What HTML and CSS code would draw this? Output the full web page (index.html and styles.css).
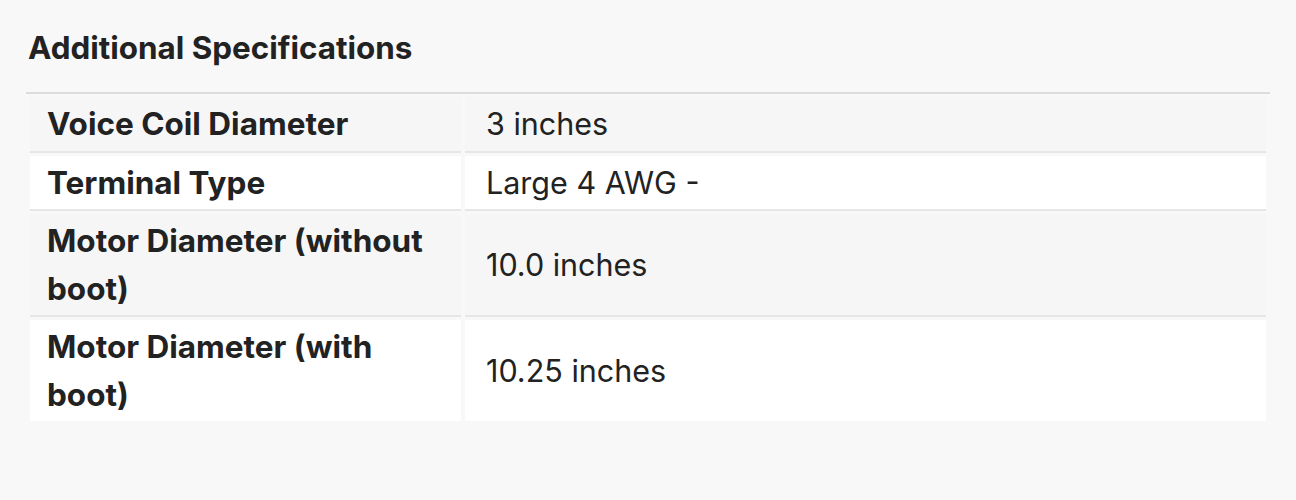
FILE: index.html
```html
<!DOCTYPE html>
<html>
<head>
<meta charset="utf-8">
<link rel="stylesheet" href="styles.css">
</head>
<body>
<section class="specs">
  <h2 class="specs-title">Additional Specifications</h2>
  <table class="specs-table">
    <tbody>
      <tr class="row-odd">
        <th class="label">Voice Coil Diameter</th>
        <td class="value">3 inches</td>
      </tr>
      <tr class="row-even">
        <th class="label">Terminal Type</th>
        <td class="value">Large 4 AWG -</td>
      </tr>
      <tr class="row-odd">
        <th class="label">Motor Diameter (without boot)</th>
        <td class="value">10.0 inches</td>
      </tr>
      <tr class="row-even last">
        <th class="label">Motor Diameter (with boot)</th>
        <td class="value">10.25 inches</td>
      </tr>
    </tbody>
  </table>
</section>
</body>
</html>
```

FILE: styles.css
```css
html, body {
  margin: 0;
  padding: 0;
  background: #f8f8f8;
}
body {
  font-family: Inter, "Noto Sans", "Liberation Sans", sans-serif;
  color: #222;
}
.specs {
  padding: 28px 26px 0 26px;
}
.specs-title {
  margin: 0 0 24px 2px;
  font-size: 31.4px;
  line-height: 40px;
  font-weight: 700;
  color: #222;
}
.specs-table {
  width: 1244px;
  border-collapse: separate;
  border-spacing: 4px 3px;
  border-top: 2px solid #dcdcdc;
  table-layout: fixed;
}
.label {
  width: 431px;
  box-sizing: border-box;
  text-align: left;
  font-weight: 700;
}
.label, .value {
  font-size: 31.5px;
  line-height: 47.5px;
  padding: 3px 16px 3px 17px;
  border-bottom: 2px solid #e6e6e6;
  vertical-align: middle;
}
.value {
  font-weight: 400;
  font-size: 30.5px;
  padding-left: 21px;
}
.row-odd .label, .row-odd .value {
  background: #f6f6f6;
}
.row-even .label, .row-even .value {
  background: #ffffff;
}
.last .label, .last .value {
  border-bottom: none;
}
```
